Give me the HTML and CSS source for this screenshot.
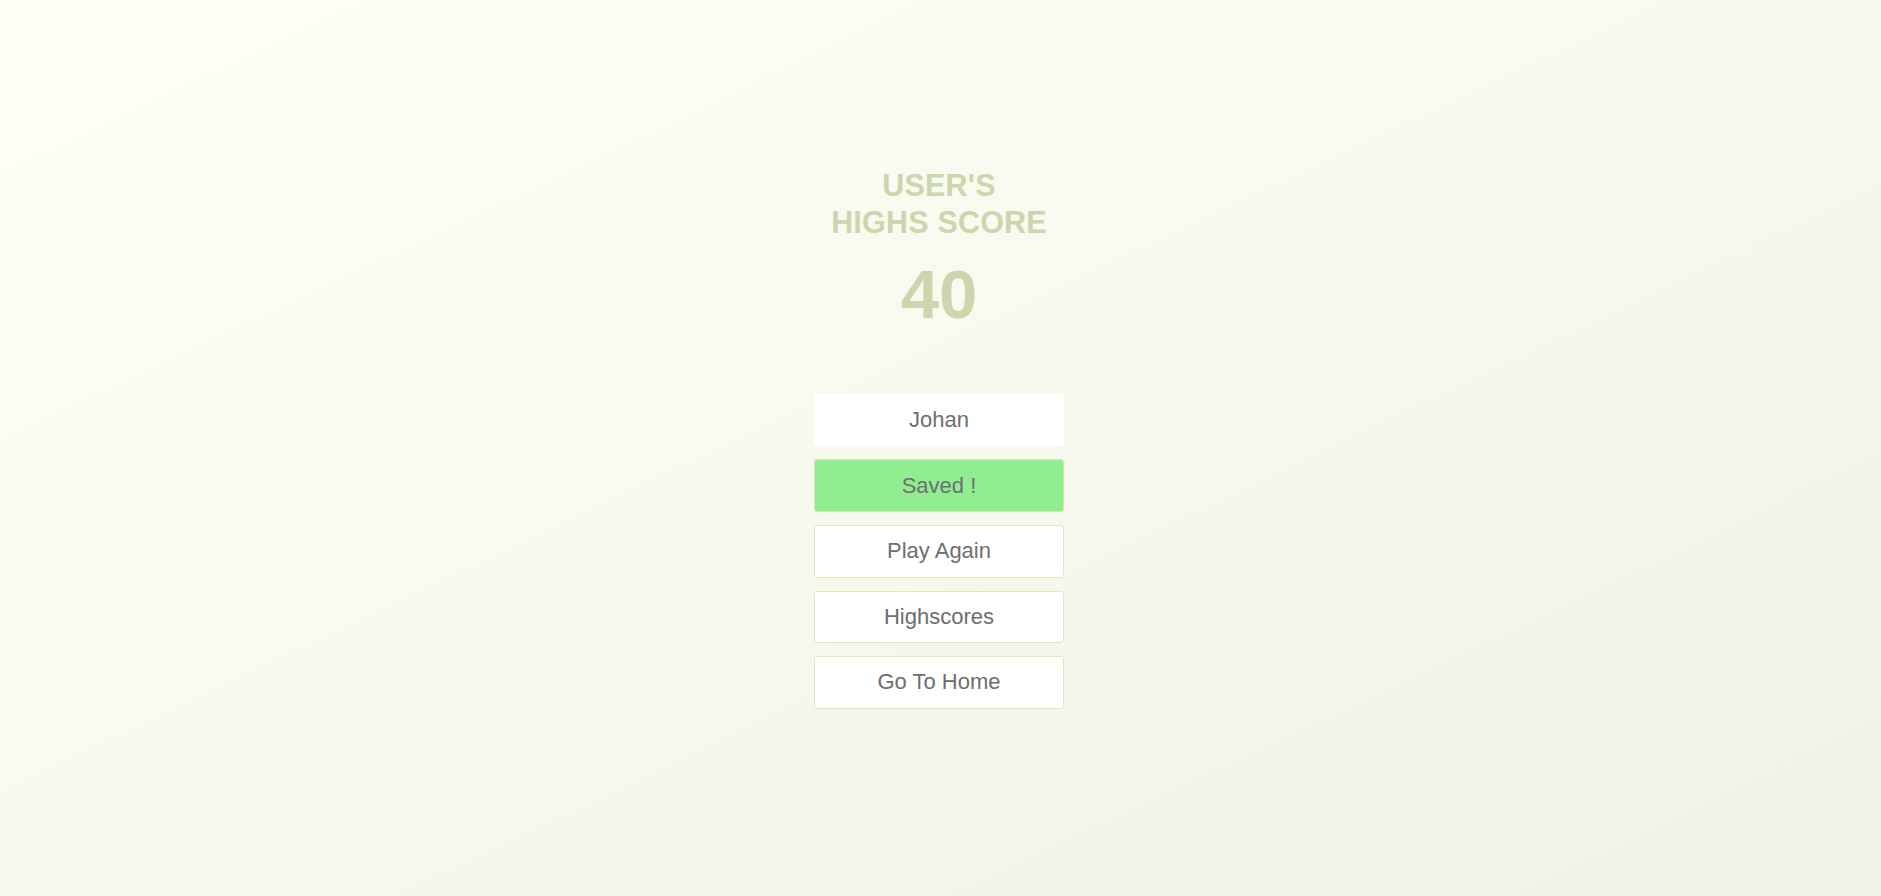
FILE: index.html
```html
<!DOCTYPE html>
<html lang="en">
<head>
<meta charset="utf-8">
<title>High Score</title>
<link rel="stylesheet" href="styles.css">
</head>
<body>
<main class="page">
  <section class="result">
    <h1 class="title">USER'S<br>HIGHS SCORE</h1>
    <p class="score">40</p>
    <form class="actions">
      <input class="name-input" type="text" value="Johan">
      <button class="btn btn-saved" type="button">Saved !</button>
      <button class="btn" type="button">Play Again</button>
      <button class="btn" type="button">Highscores</button>
      <button class="btn" type="button">Go To Home</button>
    </form>
  </section>
</main>
</body>
</html>
```

FILE: styles.css
```css
* { box-sizing: border-box; }

html, body {
  margin: 0;
  height: 100%;
}

body {
  background: linear-gradient(to bottom right, #fffff4 0%, #f7f8ee 50%, #eff1e6 100%);
  font-family: Arial, "Liberation Sans", sans-serif;
  overflow: hidden;
}

.page {
  display: flex;
  justify-content: center;
  padding-top: 167px;
  padding-right: 3px;
}

.result {
  display: flex;
  flex-direction: column;
  align-items: center;
  width: 250px;
}

.title {
  margin: 0;
  font-size: 30.5px;
  line-height: 37px;
  letter-spacing: 0.2px;
  font-weight: 700;
  color: #ccd6ac;
  text-align: center;
  white-space: nowrap;
}

.score {
  margin: 14px 0 0;
  font-size: 69px;
  line-height: 79px;
  font-weight: 700;
  color: #ccd6ac;
}

.actions {
  display: flex;
  flex-direction: column;
  gap: 13px;
  width: 250px;
  margin-top: 59px;
}

.name-input,
.btn {
  width: 100%;
  height: 53px;
  margin: 0;
  font-family: Arial, "Liberation Sans", sans-serif;
  font-size: 22px;
  color: #6e6e6e;
  text-align: center;
  border-radius: 3px;
  outline: none;
}

.name-input {
  border: 1px solid #ffffff;
  background: #ffffff;
}

.btn {
  border: 1px solid #dfe8bb;
  background: #ffffff;
  height: 52.5px;
  padding: 0;
}

.btn-saved {
  background: #90ee90;
  border-color: #d9e6ad;
  height: 53px;
}
```
